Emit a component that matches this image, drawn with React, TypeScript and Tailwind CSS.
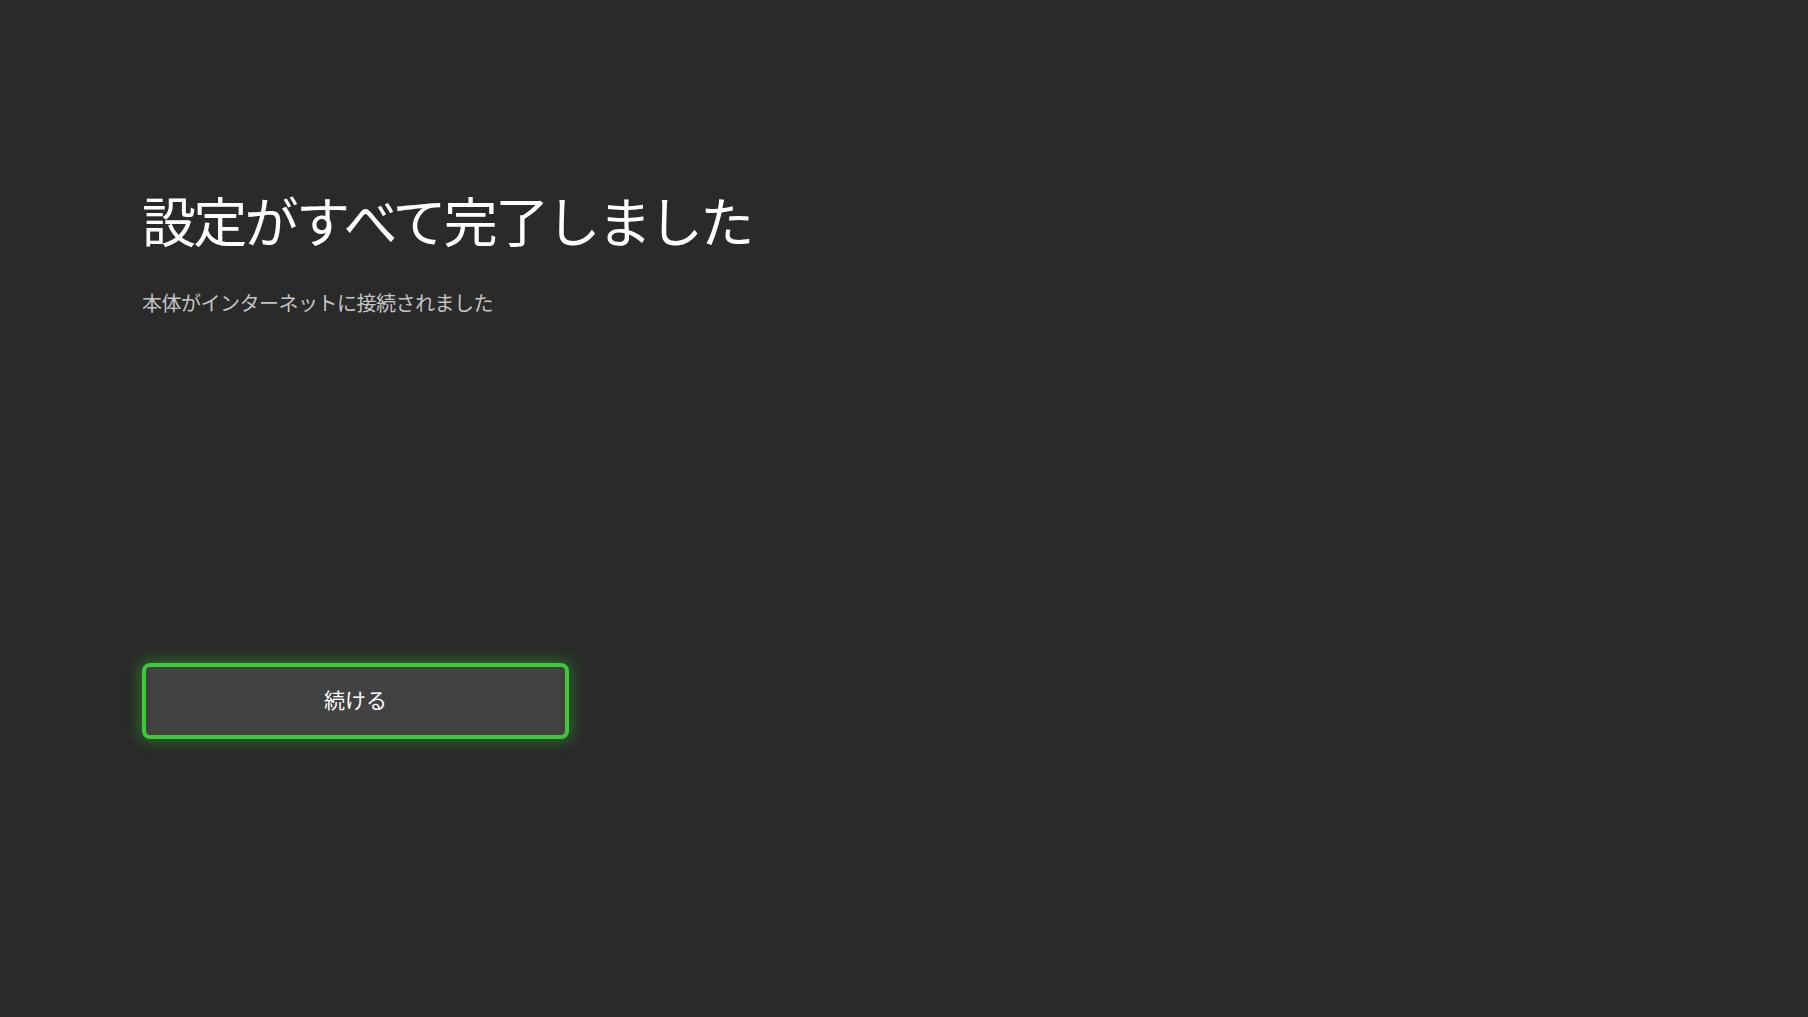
export default function App() {
  return (
    <div
      className="w-[1808px] h-[1017px] bg-[#2a2a2a] text-white overflow-hidden"
      style={{ fontFamily: '"Noto Sans CJK JP", "Noto Sans", sans-serif' }}
    >
      <div className="pl-[142px] pt-[182px] flex flex-col">
        <h1 className="text-[54px] leading-[76px] font-normal text-white tracking-[-2.7px]">
          設定がすべて完了しました
        </h1>
        <p className="mt-[31px] text-[20px] leading-[28px] text-[#c4c4c4] tracking-[-0.5px]">
          本体がインターネットに接続されました
        </p>
        <button className="mt-[346px] w-[427px] h-[76px] rounded-[8px] border-[4px] border-[#3ec83a] bg-[#414141] text-white text-[21px] shadow-[0_0_14px_3px_rgba(40,200,40,0.4)] flex items-center justify-center pb-[3px]">
          続ける
        </button>
      </div>
    </div>
  );
}
